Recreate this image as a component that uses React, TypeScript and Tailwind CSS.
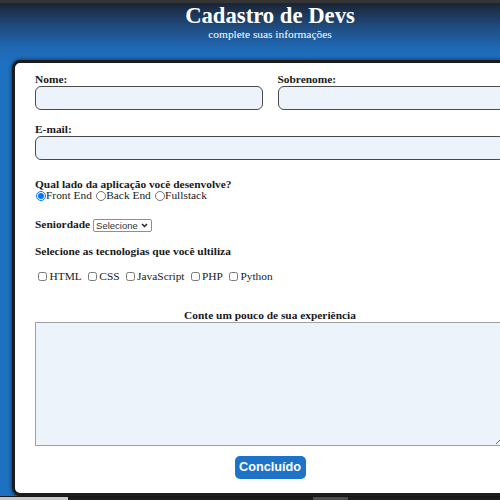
import React from 'react';

const techs = ['HTML', 'CSS', 'JavaScript', 'PHP', 'Python'];
const sides = ['Front End', 'Back End', 'Fullstack'];

const Field: React.FC<{ label: string; className?: string }> = ({ label, className }) => (
  <div className={`flex flex-col ${className ?? ''}`}>
    <label className="font-bold leading-[13px]">{label}</label>
    <input
      type="text"
      className="h-[24px] w-full rounded-[6px] border-[1.5px] border-[#4a4a4a] bg-[#edf3fb] outline-none"
    />
  </div>
);

export default function App() {
  return (
    <div className="flex h-[500px] w-[500px] flex-col overflow-hidden bg-[#1e1e1e] font-['Liberation_Serif',serif] text-[11.4px] text-[#1a1a1a]">
      <div className="h-[3px] shrink-0 bg-[#353535]" />

      <div className="flex h-[493px] w-[540px] shrink-0 flex-col bg-[linear-gradient(180deg,#1b2535_0px,#1f4c80_24px,#1f6ab6_46px,#1e70c1_60px,#1e70c1_100%)]">
        <header className="text-center text-white">
          <h1 className="pt-[1px] text-[22.7px] font-bold leading-[24px]">Cadastro de Devs</h1>
          <p className="leading-[12px]">complete suas informações</p>
        </header>

        <form className="ml-[12px] mt-[20px] flex w-[516px] flex-1 flex-col rounded-[8px] border-[3px] border-[#1c1c1c] bg-white px-[20px] pt-[10px] shadow-[0_0_4px_rgba(0,0,0,0.6)]">
          <div className="flex gap-[15px]">
            <Field label="Nome:" className="flex-1" />
            <Field label="Sobrenome:" className="flex-1" />
          </div>

          <Field label="E-mail:" className="mt-[13px]" />

          <p className="mt-[18px] font-bold leading-[12px]">Qual lado da aplicação você desenvolve?</p>
          <div className="flex h-[11px] items-center gap-[4.3px] pl-[1px] leading-[11px]">
            {sides.map((s, i) => (
              <label key={s} className="flex items-center">
                <input type="radio" name="lado" defaultChecked={i === 0} className="m-0 h-[10px] w-[10px]" />
                <span>{s}</span>
              </label>
            ))}
          </div>

          <div className="mt-[18px] flex items-start gap-[3px]">
            <label className="font-bold leading-[11px]">Seniordade</label>
            <div className="flex h-[13px] w-[59px] items-center justify-between rounded-[2px] border border-[#8f8f8f] pl-[2px] pr-[3px] font-['Liberation_Sans',sans-serif] text-[9.5px] leading-none text-[#333]">
              <span>Selecione</span>
              <svg width="7" height="5" viewBox="0 0 7 5" fill="none">
                <path d="M1 1l2.5 2.5L6 1" stroke="#222" strokeWidth="1.5" />
              </svg>
            </div>
          </div>

          <p className="mt-[13px] font-bold leading-[13px]">Selecione as tecnologias que você ultiliza</p>
          <div className="mt-[12px] flex gap-[6px] pl-[3px] leading-[13px]">
            {techs.map((t) => (
              <label key={t} className="flex items-start gap-[2.5px]">
                <input type="checkbox" className="m-0 mt-[2px] h-[9px] w-[9px]" />
                <span>{t}</span>
              </label>
            ))}
          </div>

          <p className="mt-[26px] text-center font-bold leading-[13px]">Conte um pouco de sua experiência</p>
          <textarea className="h-[124px] w-full border border-[#a0a0a0] bg-[#edf3fb] outline-none" />

          <button
            type="button"
            className="mt-[10px] h-[23px] w-[71px] self-center rounded-[5px] bg-[#1d73c8] font-['Liberation_Sans',sans-serif] text-[12.7px] font-bold text-white"
          >
            Concluído
          </button>
        </form>
      </div>

      <div className="flex h-[4px] shrink-0 items-end">
        <div className="h-[3px] w-[68px] bg-[#c9c9c9]" />
        <div className="ml-[245px] h-[3px] w-[35px] bg-[#4d4d4d]" />
      </div>
    </div>
  );
}
